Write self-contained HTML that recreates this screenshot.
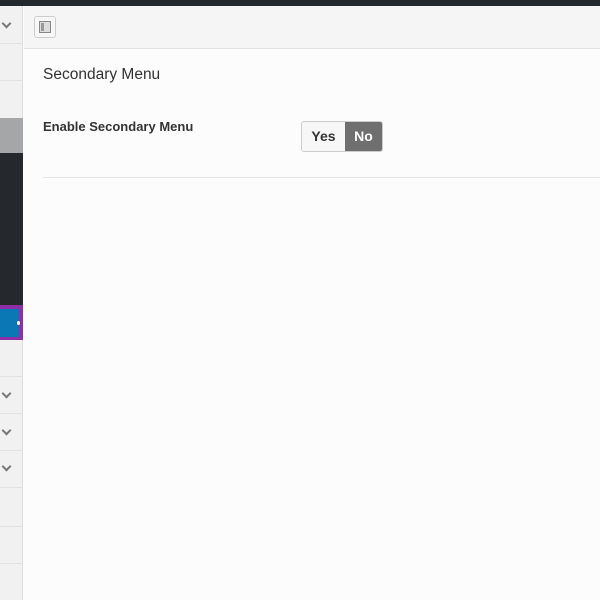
<!DOCTYPE html>
<html><head><style>
*{margin:0;padding:0;box-sizing:border-box}
body{width:600px;height:600px;overflow:hidden;background:#fcfcfc;font-family:"Liberation Sans",sans-serif;position:relative}
.a{position:absolute}
.chev{position:absolute;left:3px;width:7px;height:7px;border-right:2px solid #777;border-bottom:2px solid #777;transform:rotate(45deg)}
</style></head><body>
<div class="a" style="left:0;top:0;width:600px;height:6px;background:#23282d"></div>
<div class="a" style="left:0;top:6px;width:23px;height:594px;background:#f1f1f1;border-right:1px solid #ddd"></div>
<div class="a" style="left:0;top:43px;width:23px;height:1px;background:#e2e2e2"></div>
<div class="a" style="left:0;top:80px;width:23px;height:1px;background:#e2e2e2"></div>
<div class="a" style="left:0;top:118px;width:23px;height:35px;background:#a4a6a8"></div>
<div class="a" style="left:0;top:153px;width:23px;height:152px;background:#25292e"></div>
<div class="a" style="left:0;top:305px;width:23px;height:35px;background:#8f2fa8"></div>
<div class="a" style="left:0;top:309px;width:19px;height:28px;background:#0a78b4"></div>
<div class="a" style="left:17px;top:321px;width:3px;height:4px;background:#fff;border-radius:2px"></div>
<div class="a" style="left:0;top:376px;width:23px;height:1px;background:#e2e2e2"></div>
<div class="a" style="left:0;top:413px;width:23px;height:1px;background:#e2e2e2"></div>
<div class="a" style="left:0;top:450px;width:23px;height:1px;background:#e2e2e2"></div>
<div class="a" style="left:0;top:487px;width:23px;height:1px;background:#e2e2e2"></div>
<div class="a" style="left:0;top:526px;width:23px;height:1px;background:#e2e2e2"></div>
<div class="a" style="left:0;top:563px;width:23px;height:1px;background:#e2e2e2"></div>
<div class="chev" style="top:20px"></div>
<div class="chev" style="top:390px"></div>
<div class="chev" style="top:427px"></div>
<div class="chev" style="top:463px"></div>
<div class="a" style="left:24px;top:6px;width:576px;height:43px;background:#f5f5f5;border-bottom:1px solid #e3e3e3"></div>
<div class="a" style="left:34px;top:16px;width:22px;height:22px;border:1px solid #ccc;border-radius:3px;background:#f7f7f7"></div>
<div class="a" style="left:39px;top:21px;width:12px;height:12px;border:1px solid #888;background:#ddd"></div>
<div class="a" style="left:41px;top:23px;width:3px;height:8px;background:#999"></div>
<div class="a" style="left:43px;top:66px;font-size:15.5px;color:#333">Secondary Menu</div>
<div class="a" style="left:43px;top:119px;font-size:13px;font-weight:bold;color:#333">Enable Secondary Menu</div>
<div class="a" style="left:301px;top:121px;width:82px;height:31px;border:1px solid #ccc;border-radius:3px;overflow:hidden;display:flex;font-size:14px;font-weight:bold">
<div style="width:43px;background:#f7f7f7;color:#333;text-align:center;line-height:29px">Yes</div>
<div style="flex:1;background:#6f6f6f;color:#fff;text-align:center;line-height:29px">No</div></div>
<div class="a" style="left:43px;top:177px;width:557px;height:1px;background:#e5e5e5"></div>
</body></html>
